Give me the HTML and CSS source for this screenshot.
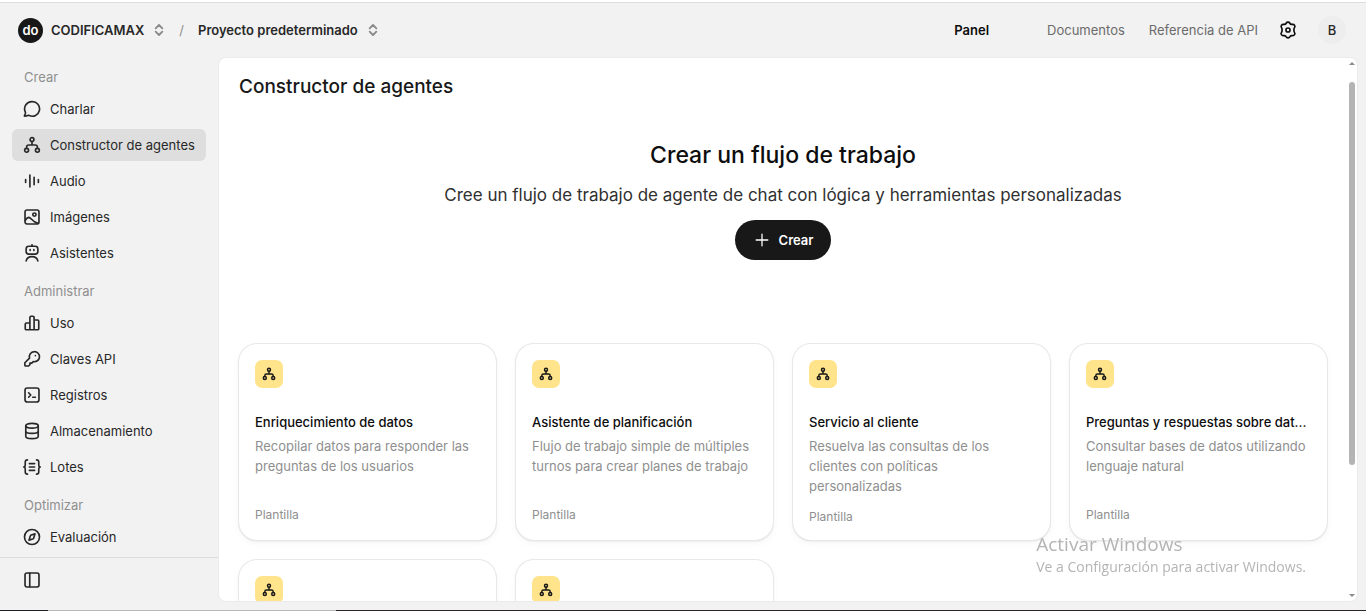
FILE: index.html
```html
<!DOCTYPE html>
<html lang="es">
<head>
  <meta charset="UTF-8" />
  <title>Constructor de agentes</title>
  <meta name="viewport" content="width=device-width, initial-scale=1" />
  <link rel="stylesheet" href="styles.css">
</head>
<body>
  <svg class="sprite" aria-hidden="true">
    <symbol id="i-flow" viewBox="0 0 24 24">
      <circle cx="12" cy="4.8" r="2.6"/><circle cx="4.8" cy="19" r="2.6"/><circle cx="19.2" cy="19" r="2.6"/>
      <path d="M12 7.4V12M4.8 16.4V15a3 3 0 0 1 3-3h8.400a3 3 0 0 1 3 3v1.400"/>
    </symbol>
    <symbol id="i-chat" viewBox="0 0 24 24">
      <path d="M12.300 2.200a9.700 9.700 0 1 1-4 18.500c-1-.4-1.600-.2-2.600.1l-3.200.8c-.5.100-.8-.3-.6-.7l1.200-2.600c.4-.9.300-1.500-.1-2.400A9.700 9.700 0 0 1 12.300 2.200z"/>
    </symbol>
    <symbol id="i-audio" viewBox="0 0 24 24">
      <path d="M3.500 10v4M9.200 4v16M14.800 7v10M20.500 10v4"/>
    </symbol>
    <symbol id="i-image" viewBox="0 0 24 24">
      <rect x="2.700" y="2.700" width="18.600" height="18.600" rx="2.500"/><circle cx="15.200" cy="8.800" r="2.200"/>
      <path d="M3 16.500c1.500-2.200 3-4 4.500-4 3.500 0 4.500 6 12.500 8"/>
    </symbol>
    <symbol id="i-robot" viewBox="0 0 24 24">
      <rect x="4.200" y="3" width="15.600" height="10.500" rx="3.500"/><path d="M12 1v2M9.500 7.500v1M14.500 7.500v1M4.200 22.500c.8-3.500 4-5.700 7.800-5.700s7 2.200 7.800 5.700"/>
    </symbol>
    <symbol id="i-bars" viewBox="0 0 24 24">
      <path d="M9.200 21V4.500a1.500 1.500 0 0 1 1.500-1.500h2.600a1.500 1.500 0 0 1 1.500 1.500V21M9.200 12H4.500A1.500 1.500 0 0 0 3 13.500v6A1.500 1.500 0 0 0 4.500 21h15a1.500 1.500 0 0 0 1.500-1.500v-10A1.500 1.500 0 0 0 19.500 8h-4.700"/>
    </symbol>
    <symbol id="i-key" viewBox="0 0 24 24">
      <path d="M15 2.200a6.700 6.700 0 1 1-1.300 13.200l-2 2H9.200v2.200l-1.800 1.700H3.500a1 1 0 0 1-1-1V17l6.200-6.200A6.700 6.700 0 0 1 15 2.200z"/><path d="M16.500 7.500v.2"/>
    </symbol>
    <symbol id="i-log" viewBox="0 0 24 24">
      <rect x="2.700" y="2.700" width="18.600" height="18.600" rx="3"/><path d="m7.500 9 2.800 3-2.800 3M13 15h3.500"/>
    </symbol>
    <symbol id="i-db" viewBox="0 0 24 24">
      <ellipse cx="12" cy="5" rx="8.300" ry="3.200"/><path d="M3.700 5v14c0 1.800 3.700 3.200 8.300 3.200s8.300-1.400 8.300-3.200V5M3.700 12c0 1.800 3.700 3.200 8.300 3.200s8.300-1.400 8.300-3.200"/>
    </symbol>
    <symbol id="i-batch" viewBox="0 0 24 24">
      <path d="M6 2.500c-2 0-3 .8-3 2.800v3.500C3 10.500 2.500 12 1 12c1.500 0 2 1.500 2 3.200v3.500c0 2 1 2.800 3 2.800M18 2.500c2 0 3 .8 3 2.800v3.500c0 1.700.5 3.200 2 3.200-1.500 0-2 1.500-2 3.200v3.500c0 2-1 2.800-3 2.800M8.500 7.500h7M8.500 12h7M8.500 16.500h7"/>
    </symbol>
    <symbol id="i-compass" viewBox="0 0 24 24">
      <circle cx="12" cy="12" r="10"/><path d="m16 7.800-5 1.500a2 2 0 0 0-1.300 1.400L8 16.200l5-1.500a2 2 0 0 0 1.300-1.400z"/>
    </symbol>
    <symbol id="i-side" viewBox="0 0 24 24">
      <rect x="2.700" y="2.700" width="18.600" height="18.600" rx="2.500"/><path d="M9 3v18"/>
    </symbol>
    <symbol id="i-gear" viewBox="0 0 24 24">
      <path d="M9.600 2.800Q10.200 1.500 12 1.500T14.400 2.800C15 4.300 16 4.900 17.800 4.500Q19.800 4.200 20.800 5.900T20.700 8.600C19.600 10 19.600 14 20.700 15.400Q21.700 16.600 20.800 18.100T17.800 19.500C16 19.100 15 19.700 14.400 21.200Q13.800 22.500 12 22.500T9.600 21.200C9 19.700 8 19.100 6.200 19.500Q4.200 19.800 3.200 18.100T3.300 15.400C4.400 14 4.400 10 3.300 8.600Q2.300 7.400 3.200 5.900T6.200 4.500C8 4.900 9 4.300 9.600 2.800z"/><circle cx="12" cy="12" r="2.700"/>
    </symbol>
    <symbol id="i-updown" viewBox="0 0 12 16">
      <path d="m2 6 4-4 4 4M2 10l4 4 4-4"/>
    </symbol>
    <symbol id="i-plus" viewBox="0 0 24 24">
      <path d="M12 2v20M2 12h20"/>
    </symbol>
  </svg>

  <div class="edge-top"></div>

  <header class="topbar">
    <span class="logo">do</span>
    <button class="switch">CODIFICAMAX <svg class="updown"><use href="#i-updown"/></svg></button>
    <span class="slash">/</span>
    <button class="switch">Proyecto predeterminado <svg class="updown"><use href="#i-updown"/></svg></button>
    <nav class="toplinks">
      <a class="current" href="#">Panel</a>
      <a href="#">Documentos</a>
      <a href="#">Referencia de API</a>
    </nav>
    <button class="gear" aria-label="Configuración"><svg class="icon"><use href="#i-gear"/></svg></button>
    <button class="avatar">B</button>
  </header>

  <div class="layout">
    <aside class="sidebar">
      <nav class="menu">
        <h2>Crear</h2>
        <a href="#"><svg class="icon"><use href="#i-chat"/></svg>Charlar</a>
        <a class="active" href="#"><svg class="icon"><use href="#i-flow"/></svg>Constructor de agentes</a>
        <a href="#"><svg class="icon"><use href="#i-audio"/></svg>Audio</a>
        <a href="#"><svg class="icon"><use href="#i-image"/></svg>Imágenes</a>
        <a href="#"><svg class="icon"><use href="#i-robot"/></svg>Asistentes</a>
        <h2>Administrar</h2>
        <a href="#"><svg class="icon"><use href="#i-bars"/></svg>Uso</a>
        <a href="#"><svg class="icon"><use href="#i-key"/></svg>Claves API</a>
        <a href="#"><svg class="icon"><use href="#i-log"/></svg>Registros</a>
        <a href="#"><svg class="icon"><use href="#i-db"/></svg>Almacenamiento</a>
        <a href="#"><svg class="icon"><use href="#i-batch"/></svg>Lotes</a>
        <h2>Optimizar</h2>
        <a href="#"><svg class="icon"><use href="#i-compass"/></svg>Evaluación</a>
      </nav>
      <div class="sidebar-foot">
        <button class="collapse" aria-label="Contraer"><svg class="icon"><use href="#i-side"/></svg></button>
      </div>
    </aside>

    <main class="panel">
      <div class="content">
        <h1>Constructor de agentes</h1>
        <section class="hero">
          <h2>Crear un flujo de trabajo</h2>
          <p>Cree un flujo de trabajo de agente de chat con lógica y herramientas personalizadas</p>
          <button class="create"><svg class="plus"><use href="#i-plus"/></svg>Crear</button>
        </section>
        <section class="cards">
          <a class="card" href="#">
            <span class="badge"><svg><use href="#i-flow"/></svg></span>
            <h3>Enriquecimiento de datos</h3>
            <p>Recopilar datos para responder las preguntas de los usuarios</p>
            <small>Plantilla</small>
          </a>
          <a class="card" href="#">
            <span class="badge"><svg><use href="#i-flow"/></svg></span>
            <h3>Asistente de planificación</h3>
            <p>Flujo de trabajo simple de múltiples turnos para crear planes de trabajo</p>
            <small>Plantilla</small>
          </a>
          <a class="card" href="#">
            <span class="badge"><svg><use href="#i-flow"/></svg></span>
            <h3>Servicio al cliente</h3>
            <p>Resuelva las consultas de los clientes con políticas personalizadas</p>
            <small>Plantilla</small>
          </a>
          <a class="card" href="#">
            <span class="badge"><svg><use href="#i-flow"/></svg></span>
            <h3>Preguntas y respuestas sobre dat...</h3>
            <p>Consultar bases de datos utilizando lenguaje natural</p>
            <small>Plantilla</small>
          </a>
          <a class="card" href="#">
            <span class="badge"><svg><use href="#i-flow"/></svg></span>
          </a>
          <a class="card" href="#">
            <span class="badge"><svg><use href="#i-flow"/></svg></span>
          </a>
        </section>
      </div>
      <div class="scrollbar">
        <span class="arrow-up"></span>
        <div class="track"><div class="thumb"></div></div>
        <span class="arrow-down"></span>
      </div>
    </main>
  </div>

  <div class="edge-bottom"></div>

  <div class="watermark">
    <div class="watermark-title">Activar Windows</div>
    <div class="watermark-text">Ve a Configuración para activar Windows.</div>
  </div>
</body>
</html>
```
FILE: styles.css
```css
* {
  box-sizing: border-box;
}
body {
  display: flex;
  flex-direction: column;
  height: 100vh;
  margin: 0;
  overflow: hidden;
  background: #f2f2f2;
  color: #282828;
  font-family: Inter, sans-serif;
  font-size: 13px;
  line-height: 20px;
}
h1, h2, h3, p {
  margin: 0;
}
a {
  color: inherit;
  text-decoration: none;
}
button {
  padding: 0;
  border: none;
  background: none;
  color: inherit;
  font: inherit;
  cursor: pointer;
}
svg {
  flex: none;
  fill: none;
  stroke: currentColor;
  stroke-width: 2.2;
  stroke-linecap: round;
  stroke-linejoin: round;
}
.sprite {
  display: none;
}
.icon {
  width: 18px;
  height: 18px;
}
.edge-top {
  flex: none;
  height: 3px;
  background: #fff;
  border-bottom: 1px solid #dcdcdc;
}
.edge-bottom {
  flex: none;
  height: 1px;
  background: linear-gradient(to right, #1c2025 48px, #b8b8b8 48px, #b8b8b8 336px, #2b2527 336px);
}

/* top bar */
.topbar {
  display: flex;
  flex: none;
  align-items: center;
  height: 54px;
  padding: 0 20px 0 18px;
}
.logo {
  width: 25px;
  height: 25px;
  margin-right: 8px;
  border-radius: 50%;
  background: #181818;
  color: #fff;
  font-weight: 600;
  line-height: 24px;
  text-align: center;
}
.switch {
  display: flex;
  align-items: center;
  gap: 10px;
  font-weight: 600;
}
.updown {
  width: 10px;
  height: 14px;
  color: #8a8a8a;
}
.slash {
  margin: 0 14px 0 15px;
  color: #8f8f8f;
}
.toplinks {
  display: flex;
  gap: 24px;
  margin-left: auto;
  color: #6b6b6b;
}
.toplinks .current {
  margin-right: 34px;
  color: #0d0d0d;
  font-weight: 600;
}
.gear {
  display: flex;
  margin: 0 21px;
  color: #0d0d0d;
}
.avatar {
  width: 28px;
  height: 28px;
  border-radius: 50%;
  background: #ededed;
  font-weight: 500;
}

/* sidebar */
.layout {
  display: flex;
  flex: 1;
  min-height: 0;
}
.sidebar {
  display: flex;
  flex: none;
  flex-direction: column;
  width: 218px;
}
.menu {
  flex: 1;
  min-height: 0;
  padding: 10px 12px 0;
  overflow: hidden;
}
.menu h2 {
  margin: 12px 12px 6px;
  color: #8f8f8f;
  font-size: 13px;
  font-weight: 400;
  line-height: 20px;
}
.menu h2:first-child {
  margin-top: 0;
}
.menu a {
  display: flex;
  align-items: center;
  gap: 9px;
  height: 32px;
  margin-bottom: 4px;
  padding-left: 11px;
  border-radius: 6px;
  white-space: nowrap;
}
.menu a:has(+ h2) {
  margin-bottom: 0;
}
.menu .active {
  background: #dedede;
}
.sidebar-foot {
  padding: 6px 12px 14px;
  border-top: 1px solid #dcdcdc;
}
.collapse {
  display: flex;
  align-items: center;
  height: 32px;
  padding-left: 11px;
}

/* main panel */
.panel {
  display: flex;
  flex: 1;
  min-width: 0;
  margin: 0 8px 8px 0;
  border: 1px solid #ebebeb;
  border-radius: 8px;
  background: #fff;
  overflow: hidden;
}
.content {
  flex: 1;
  min-width: 0;
  padding: 16px 20px;
}
h1 {
  color: #181818;
  font-size: 19px;
  font-weight: 500;
  line-height: 26px;
}
.hero {
  display: flex;
  flex-direction: column;
  align-items: center;
  padding: 39px 0 84px;
}
.hero h2 {
  color: #0d0d0d;
  font-size: 23px;
  font-weight: 500;
  line-height: 32px;
}
.hero p {
  margin: 10px 0 11px;
  color: #303030;
  font-size: 17px;
  line-height: 28px;
}
.create {
  display: flex;
  align-items: center;
  gap: 10px;
  height: 40px;
  padding: 0 18px 0 20px;
  border-radius: 20px;
  background: #181818;
  color: #fff;
  font-weight: 600;
}
.plus {
  width: 14px;
  height: 14px;
}
.cards {
  display: grid;
  grid-template-columns: repeat(4, 1fr);
  gap: 20px;
}
.card {
  display: flex;
  flex-direction: column;
  min-width: 0;
  height: 196px;
  padding: 16px;
  border-radius: 18px;
  box-shadow: 0 0 0 1px #e8e8e8, 0 1px 2px #0002, 0 3px 8px #0000000a;
}
.badge {
  display: flex;
  flex: none;
  align-items: center;
  justify-content: center;
  width: 28px;
  height: 28px;
  margin-bottom: 24px;
  border-radius: 7px;
  background: #ffe48c;
  color: #181818;
}
.badge svg {
  width: 14px;
  height: 14px;
  stroke-width: 2.5;
}
.card h3 {
  flex: none;
  margin-bottom: 4px;
  overflow: hidden;
  color: #0d0d0d;
  font-size: 13px;
  font-weight: 500;
  line-height: 20px;
  text-overflow: ellipsis;
  white-space: nowrap;
}
.card p {
  flex: none;
  margin-bottom: 12px;
  color: #8f8f8f;
}
.card small {
  flex: none;
  margin-top: auto;
  color: #8f8f8f;
  font-size: 12px;
  line-height: 18px;
}

/* scrollbar */
.scrollbar {
  display: flex;
  flex: none;
  flex-direction: column;
  align-items: center;
  width: 10px;
  padding: 4px 0;
}
.track {
  flex: 1;
  width: 6px;
  margin: 17px 0 15px;
}
.thumb {
  height: 77%;
  border-radius: 3px;
  background: #b4b4b4;
}
.arrow-up, .arrow-down {
  border: 3px solid transparent;
}
.arrow-up {
  border-top: none;
  border-bottom-color: #8a8a8a;
}
.arrow-down {
  border-bottom: none;
  border-top-color: #8a8a8a;
}

.watermark {
  position: fixed;
  right: 60px;
  bottom: 34px;
  color: #b4b4b4;
  font-family: "Open Sans", sans-serif;
  pointer-events: none;
}
.watermark-title {
  font-size: 19px;
  line-height: 25px;
}
.watermark-text {
  font-size: 14px;
}
```
